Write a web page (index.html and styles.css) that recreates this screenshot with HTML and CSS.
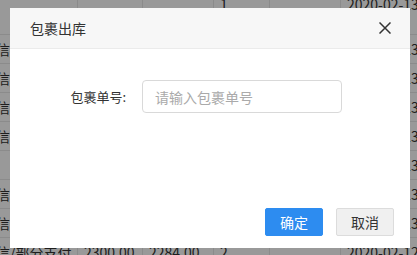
FILE: index.html
```html
<!DOCTYPE html>
<html lang="zh-CN">
<head>
  <meta charset="UTF-8">
  <meta name="viewport" content="width=device-width, initial-scale=1.0">
  <title>包裹出库</title>
  <link rel="stylesheet" href="styles.css">
</head>
<body>
  <div class="page">
    <table class="list">
      <colgroup>
        <col class="c1"><col class="c2"><col class="c3"><col class="c4"><col class="c5"><col class="c6">
      </colgroup>
      <tr class="first"><td></td><td></td><td></td><td>1</td><td></td><td>2020-02-13 1</td></tr>
      <tr><td>信/部分支付</td><td></td><td></td><td></td><td></td><td>2020-02-13 1</td></tr>
      <tr><td>信/部分支付</td><td></td><td></td><td></td><td></td><td>2020-02-13 1</td></tr>
      <tr><td>信/部分支付</td><td></td><td></td><td></td><td></td><td>2020-02-13 1</td></tr>
      <tr><td>信/部分支付</td><td></td><td></td><td></td><td></td><td>2020-02-13 1</td></tr>
      <tr><td></td><td></td><td></td><td></td><td></td><td>2020-02-13 1</td></tr>
      <tr><td>信/部分支付</td><td></td><td></td><td></td><td></td><td>2020-02-13 1</td></tr>
      <tr><td>信/部分支付</td><td></td><td></td><td></td><td></td><td>2020-02-13 1</td></tr>
      <tr><td>信/部分支付</td><td>2300.00</td><td>2284.00</td><td>2</td><td></td><td>2020-02-12 1</td></tr>
    </table>
  </div>

  <div class="mask"></div>

  <div class="dialog">
    <div class="dialog-header">
      <span class="dialog-title">包裹出库</span>
      <span class="dialog-close">
        <svg width="12" height="12" viewBox="0 0 12 12">
          <path d="M0.5 0.5 L11.5 11.5 M11.5 0.5 L0.5 11.5" stroke="#333" stroke-width="1.5" fill="none"/>
        </svg>
      </span>
    </div>
    <div class="dialog-body">
      <div class="form-row">
        <label class="form-label">包裹单号:</label>
        <input class="form-input" type="text" placeholder="请输入包裹单号">
      </div>
    </div>
    <div class="dialog-footer">
      <button class="btn btn-primary">确定</button>
      <button class="btn btn-default">取消</button>
    </div>
  </div>
</body>
</html>
```

FILE: styles.css
```css
body {
  margin: 0;
  font-family: "Microsoft YaHei", "Noto Sans CJK SC", sans-serif;
  background: #fff;
  overflow: hidden;
}
.page {
  height: 255px;
  overflow: hidden;
}
.list {
  table-layout: fixed;
  width: 460px;
  border-collapse: collapse;
  margin-top: -9px;
  margin-left: -11px;
  font-size: 14px;
  color: #333;
}
.list .c1 { width: 88px; }
.list .c2 { width: 65px; }
.list .c3 { width: 71px; }
.list .c4 { width: 56px; }
.list .c5 { width: 71px; }
.list .c6 { width: 109px; }
.list td {
  height: 28px;
  padding: 0 6px;
  border-bottom: 1px solid #e8e8e8;
  border-left: 1px solid #e8e8e8;
  white-space: nowrap;
  overflow: hidden;
  vertical-align: middle;
}
.list tr.first td {
  height: 40px;
  vertical-align: top;
  padding-top: 3px;
}
.mask {
  position: fixed;
  inset: 0;
  background: rgba(0, 0, 0, 0.4);
}
.dialog {
  position: absolute;
  left: 10px;
  top: 8px;
  width: 400px;
  height: 240px;
  background: #fff;
  display: flex;
  flex-direction: column;
}
.dialog-header {
  height: 41px;
  box-sizing: border-box;
  background: #f7f7f7;
  border-bottom: 1px solid #ebebeb;
  padding: 0 19px 0 20px;
  display: flex;
  align-items: center;
  justify-content: space-between;
}
.dialog-title {
  font-size: 14px;
  color: #333;
}
.dialog-close {
  display: flex;
  cursor: pointer;
}
.dialog-body {
  flex: 1;
  padding-top: 31px;
}
.form-row {
  display: flex;
  align-items: center;
}
.form-label {
  width: 132px;
  box-sizing: border-box;
  padding-right: 16px;
  text-align: right;
  font-size: 13px;
  color: #333;
}
.form-input {
  width: 200px;
  height: 33px;
  box-sizing: border-box;
  border: 1px solid #d9d9d9;
  border-radius: 4px;
  padding: 0 12px;
  font-family: inherit;
  font-size: 14px;
  color: #333;
  outline: none;
}
.form-input::placeholder {
  color: #aaa;
}
.dialog-footer {
  display: flex;
  justify-content: flex-end;
  gap: 13px;
  padding: 0 16px 12px 0;
}
.btn {
  width: 58px;
  height: 28px;
  box-sizing: border-box;
  border-radius: 2px;
  font-family: inherit;
  font-size: 14px;
  padding: 0;
  cursor: pointer;
}
.btn-primary {
  background: #2d8cf0;
  border: 1px solid #2d8cf0;
  color: #fff;
}
.btn-default {
  background: #f0f0f0;
  border: 1px solid #dcdcdc;
  color: #333;
}
```
